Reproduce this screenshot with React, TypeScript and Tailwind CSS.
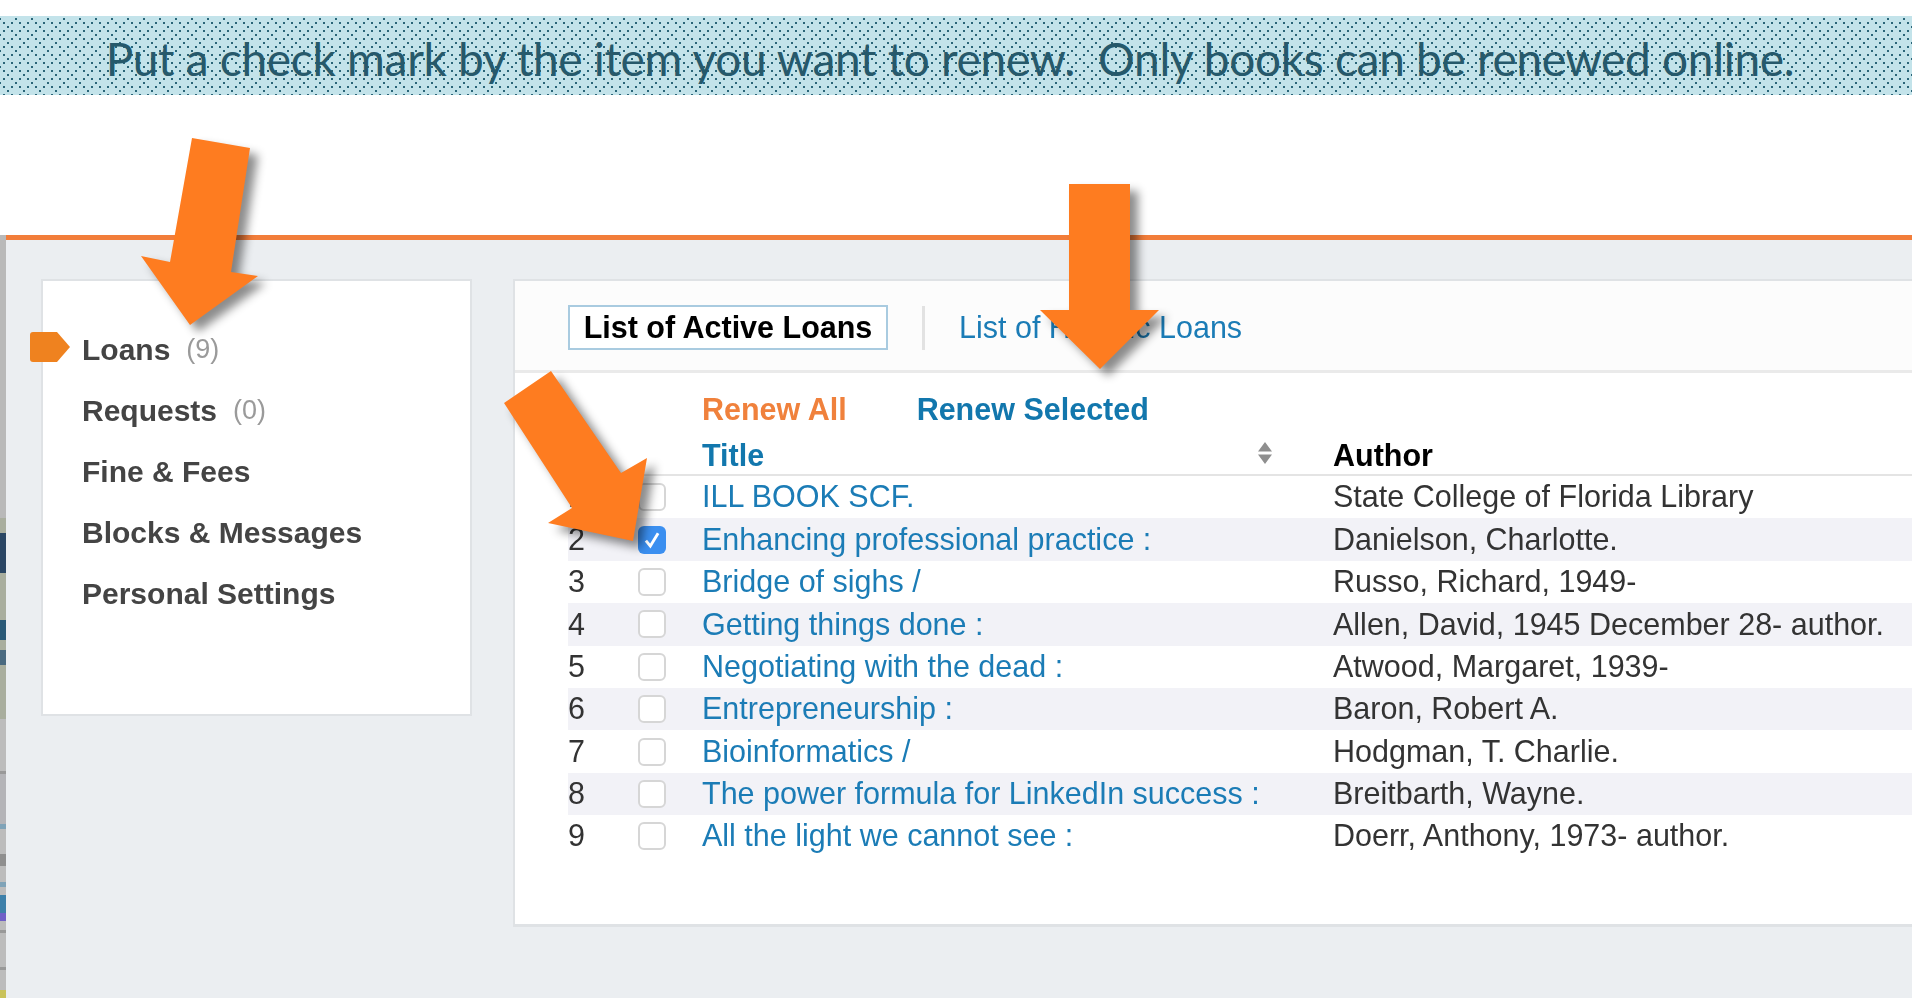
const menu = [
    { label: "Loans", count: "(9)", active: true },
    { label: "Requests", count: "(0)" },
    { label: "Fine & Fees" },
    { label: "Blocks & Messages" },
    { label: "Personal Settings" },
];

const loans = [
    { n: "1", title: "ILL BOOK SCF.", author: "State College of Florida Library" },
    { n: "2", title: "Enhancing professional practice :", author: "Danielson, Charlotte.", checked: true },
    { n: "3", title: "Bridge of sighs /", author: "Russo, Richard, 1949-" },
    { n: "4", title: "Getting things done :", author: "Allen, David, 1945 December 28- author." },
    { n: "5", title: "Negotiating with the dead :", author: "Atwood, Margaret, 1939-" },
    { n: "6", title: "Entrepreneurship :", author: "Baron, Robert A." },
    { n: "7", title: "Bioinformatics /", author: "Hodgman, T. Charlie." },
    { n: "8", title: "The power formula for LinkedIn success :", author: "Breitbarth, Wayne." },
    { n: "9", title: "All the light we cannot see :", author: "Doerr, Anthony, 1973- author." },
];

const arrows = [
    "192,138 250,148 231,272 258,276 190,325 141,256 170,262",
    "1069,184 1130,184 1130,310 1159,310 1100,369 1040,310 1069,310",
    "551,371 504,403 572,508 548,523 633,541 647,458 621,473",
];

// sliver of the window behind, left edge of the screenshot
const strip = [
    "h-[283px] bg-[#b9b9b9]",
    "h-[15px] bg-[#a9ae9e]",
    "h-[40px] bg-[#2a4664]",
    "h-[47px] bg-[#a9ae9e]",
    "h-[20px] bg-[#2a5a78]",
    "h-[10px] bg-[#a9ae9e]",
    "h-[15px] bg-[#4a6a80]",
    "h-[54px] bg-[#a9ae9e]",
    "h-[52px] bg-[#bcbcbc]",
    "h-[3px] bg-[#999999]",
    "h-[50px] bg-[#b4b4b8]",
    "h-[5px] bg-[#7fa3b8]",
    "h-[25px] bg-[#bcbcbc]",
    "h-[12px] bg-[#8f8f8f]",
    "h-[16px] bg-[#bcbcbc]",
    "h-[5px] bg-[#7fa3b8]",
    "h-[8px] bg-[#bcbcbc]",
    "h-[18px] bg-[#3d80aa]",
    "h-[8px] bg-[#7060c8]",
    "h-[9px] bg-[#bcbcbc]",
    "h-[3px] bg-[#999999]",
    "h-[34px] bg-[#bcbcbc]",
    "h-[3px] bg-[#999999]",
    "h-[20px] bg-[#bcbcbc]",
    "h-[8px] bg-[#c9c25a]",
];

function Checkbox({ checked }: { checked?: boolean }) {
    if (checked) {
        return (
            <div className="w-[28px] h-[28px] rounded-md bg-[#3b8ff0] flex items-center justify-center">
                <svg width="20" height="20" viewBox="0 0 18 18" fill="none">
                    <path d="M3.5 9.5 L7.5 14.5 L14.5 3" stroke="white" strokeWidth="2.6" />
                </svg>
            </div>
        );
    }
    return <div className="w-[28px] h-[28px] rounded-md border-2 border-[#d6d6d6] bg-white" />;
}

export default function App() {
    return (
        <div className="relative w-[1912px] h-[998px] overflow-hidden bg-white font-['Liberation_Sans',sans-serif]">
            <div className="mt-4 h-[79px] pt-[6px] flex items-center justify-center bg-[#c3e3ea] bg-[radial-gradient(circle,#2a6578_0.9px,transparent_1.1px),radial-gradient(circle,#2a6578_0.9px,transparent_1.1px),radial-gradient(circle,#2a6578_0.9px,transparent_1.1px)] bg-size-[8px_8px,16px_16px,16px_16px] bg-position-[0px_3px,-8px_-5px,0px_3px]">
                <div className="mr-[12px] whitespace-pre text-[46px] text-[#26596b] font-['Lato',sans-serif] tracking-[-0.3px]">
                    Put a check mark by the item you want to renew.  Only books can be renewed online.
                </div>
            </div>

            <div className="mt-[140px] h-[763px] flex blur-[0.5px]">
                <div className="w-[6px] shrink-0 flex flex-col">
                    {strip.map((cls, i) => <div key={i} className={cls} />)}
                </div>

                <div className="flex-1 flex flex-col">
                    <div className="h-[5px] bg-[#f27d3a]" />
                    <div className="flex-1 flex items-start bg-[#ebeef1] pt-[39px] pl-[35px] gap-[41px]">
                        <div className="w-[431px] h-[437px] shrink-0 bg-white border-[2px] border-[#dfe2e5] pt-[38px]">
                            {menu.map(item => (
                                <div key={item.label} className="relative h-[61px] flex items-center pl-[39px] text-[30px]">
                                    {item.active && (
                                        <svg className="absolute left-[-13px] top-[13px]" width="40" height="30" viewBox="0 0 40 30">
                                            <path d="M3 0 H27 L40 15 L27 30 H3 Q0 30 0 27 V3 Q0 0 3 0 Z" fill="#ef821f" />
                                        </svg>
                                    )}
                                    <span className="font-bold text-[#444444]">{item.label}</span>
                                    {item.count && <span className="ml-[16px] text-[27px] text-[#9a9a9a]">{item.count}</span>}
                                </div>
                            ))}
                        </div>

                        <div className="flex-1 h-[648px] bg-white border-t-[2px] border-b-[3px] border-l-[2px] border-[#dfe2e5]">
                            <div className="h-[92px] pt-[4px] bg-[#fcfcfc] border-b-[3px] border-[#eaeaea] flex items-center pl-[53px]">
                                <div className="h-[45px] w-[320px] flex items-center justify-center bg-white border-[2px] border-[#a9cbe0] text-[30.5px] font-bold text-black">
                                    List of Active Loans
                                </div>
                                <div className="ml-[34px] w-[3px] h-[44px] bg-[#e2e2e2]" />
                                <div className="ml-[34px] text-[30.5px] text-[#1b7cb6]">List of Historic Loans</div>
                            </div>

                            <div className="pl-[53px] text-[30.5px]">
                                <div className="h-[51px] pt-[22px] flex items-center pl-[134px] font-bold">
                                    <span className="text-[#f0813c]">Renew All</span>
                                    <span className="ml-[70px] text-[#1277ad]">Renew Selected</span>
                                </div>
                                <div className="h-[52px] pt-[13px] flex items-center border-b-[2px] border-[#e4e4e4] pl-[134px]">
                                    <div className="relative w-[631px] font-bold text-[#1277ad]">
                                        Title
                                        <svg className="absolute left-[555px] top-[9px]" width="16" height="22" viewBox="0 0 16 22">
                                            <path d="M8 0 L15 9.5 H1 Z M1 12.5 H15 L8 22 Z" fill="#8f8f8f" />
                                        </svg>
                                    </div>
                                    <div className="font-bold text-black">Author</div>
                                </div>
                                {loans.map((loan, i) => (
                                    <div key={loan.n} className={`h-[42.4px] flex items-center ${i % 2 === 1 ? "bg-[#f2f2f7]" : "bg-white"}`}>
                                        <div className="w-[70px] text-[#333333]">{loan.n}</div>
                                        <div className="w-[64px]"><Checkbox checked={loan.checked} /></div>
                                        <div className="w-[631px] text-[#1b7cb6]">{loan.title}</div>
                                        <div className="text-[#333333]">{loan.author}</div>
                                    </div>
                                ))}
                            </div>
                        </div>
                    </div>
                </div>
            </div>

            <svg className="absolute inset-0" width="1912" height="998" viewBox="0 0 1912 998">
                {arrows.map(points => (
                    <polygon key={points} points={points} fill="#fe7c20" className="[filter:drop-shadow(8px_7px_5px_rgba(0,0,0,0.45))]" />
                ))}
            </svg>
        </div>
    );
}
